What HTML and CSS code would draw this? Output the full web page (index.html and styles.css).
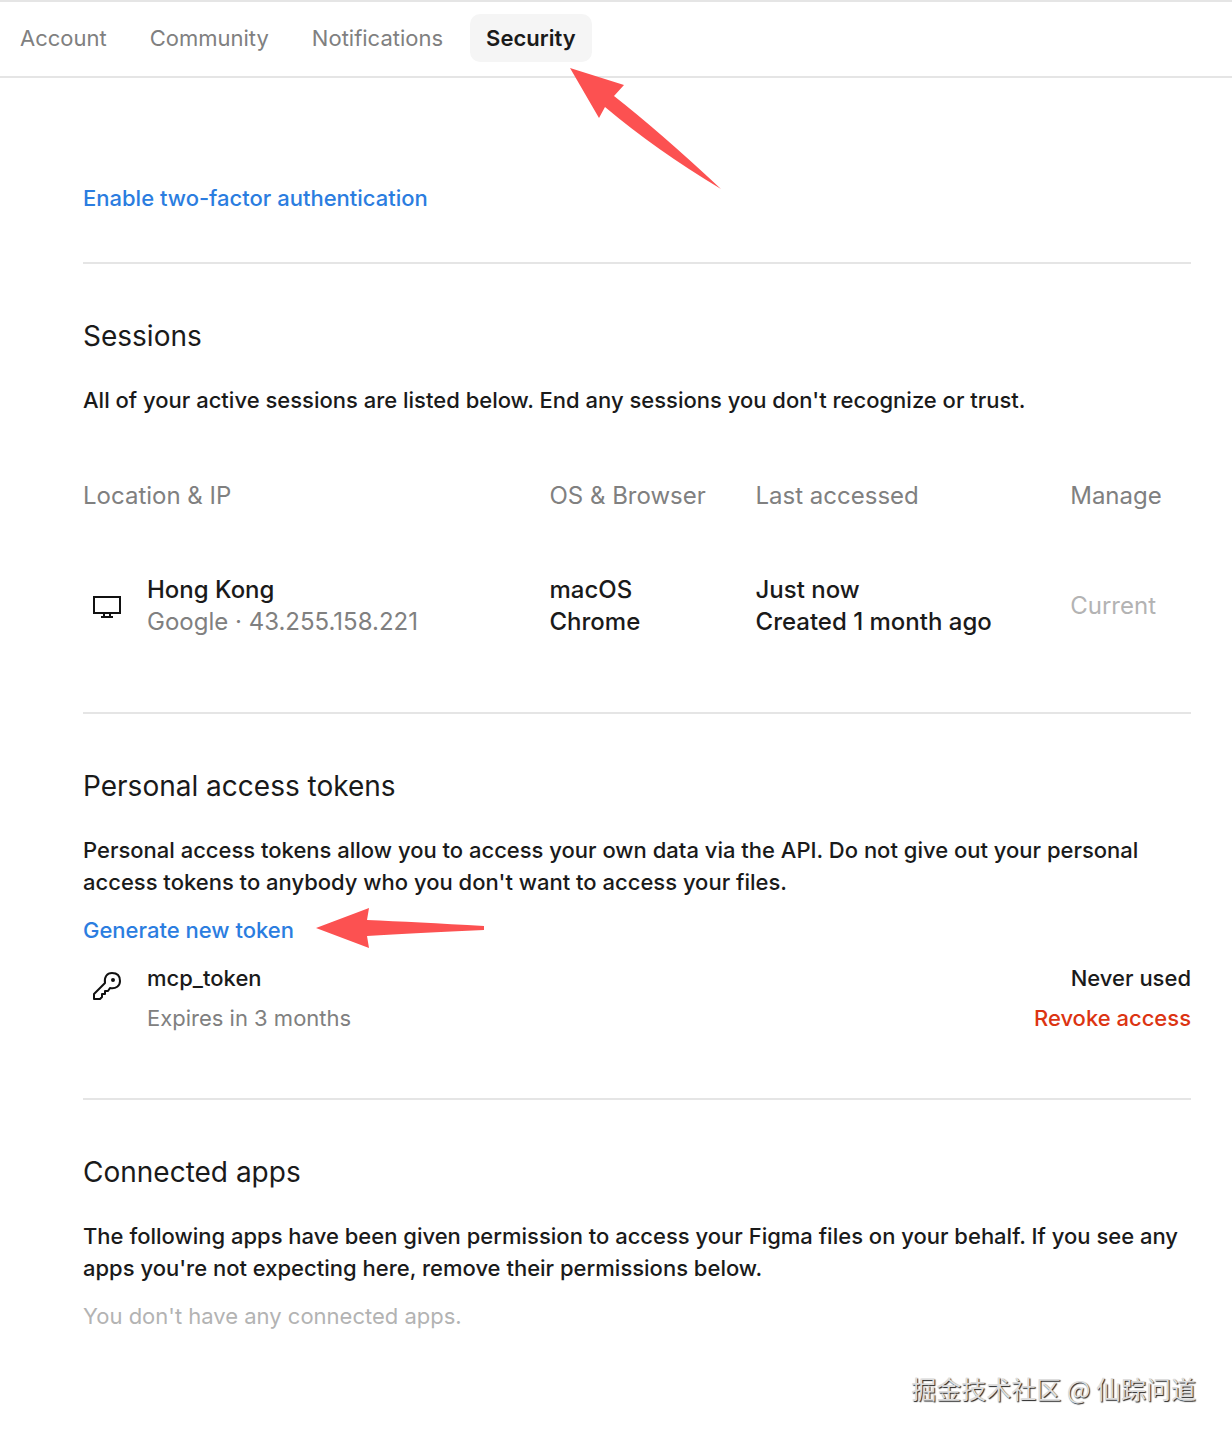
FILE: index.html
```html
<!DOCTYPE html>
<html lang="en">

<head>
    <meta charset="UTF-8">
    <meta name="viewport" content="width=device-width, initial-scale=1.0">
    <title>Settings - Security</title>
    <link rel="stylesheet" href="styles.css">
</head>

<body>
<nav class="tabs">
    <button class="tab" type="button">Account</button>
    <button class="tab" type="button">Community</button>
    <button class="tab" type="button">Notifications</button>
    <button class="tab active" type="button">
        Security
        <svg class="arrow-tab" width="152" height="123" viewBox="0 0 152 123" aria-hidden="true">
            <path d="M0 0 L54 17 L44 28 Q90 64 151 121 Q86 82 35 39 L29 50 Z" fill="#fc5151"/>
        </svg>
    </button>
</nav>

<main>
    <section class="two-factor">
        <a href="#">Enable two-factor authentication</a>
    </section>

    <section>
        <h2>Sessions</h2>
        <p>All of your active sessions are listed below. End any sessions you don't recognize or trust.</p>
        <table class="sessions">
            <thead>
                <tr>
                    <th class="col-location">Location &amp; IP</th>
                    <th class="col-os">OS &amp; Browser</th>
                    <th class="col-accessed">Last accessed</th>
                    <th>Manage</th>
                </tr>
            </thead>
            <tbody>
                <tr>
                    <td>
                        <div class="device">
                            <svg class="icon" width="48" height="48" viewBox="0 0 48 48" fill="none" stroke="#111" stroke-width="2" aria-hidden="true">
                                <rect x="11" y="15" width="26" height="16"/>
                                <path d="M21 32v3M27 32v3M18 35h12"/>
                            </svg>
                            <div>
                                <div>Hong Kong</div>
                                <div class="muted">Google · 43.255.158.221</div>
                            </div>
                        </div>
                    </td>
                    <td>macOS<br>Chrome</td>
                    <td>Just now<br>Created 1 month ago</td>
                    <td class="faint">Current</td>
                </tr>
            </tbody>
        </table>
    </section>

    <section>
        <h2>Personal access tokens</h2>
        <p>Personal access tokens allow you to access your own data via the API. Do not give out your personal access tokens to anybody who you don't want to access your files.</p>
        <div class="generate">
            <a href="#">Generate new token</a>
            <svg class="arrow-token" width="169" height="44" viewBox="0 0 169 44" aria-hidden="true">
                <path d="M0 20 L53 0 L51 12 Q100 14 168 18 V22 Q100 25 51 28 L53 40 Z" fill="#fc5151"/>
            </svg>
        </div>
        <div class="token">
            <svg class="icon" width="48" height="48" viewBox="0 0 48 48" fill="none" stroke="#111" stroke-width="2" stroke-linejoin="round" aria-hidden="true">
                <path d="M11 32l11-11c-1-6 2-10 7-10 5 0 8 3 8 8s-4 8-10 7l-2 3h-3v3h-3v3l-2 2h-6z"/>
                <circle cx="30" cy="18" r="1"/>
            </svg>
            <div class="token-info">
                <span>mcp_token</span>
                <span class="muted">Expires in 3 months</span>
            </div>
            <div class="token-actions">
                <span>Never used</span>
                <button class="revoke" type="button">Revoke access</button>
            </div>
        </div>
    </section>

    <section>
        <h2>Connected apps</h2>
        <p>The following apps have been given permission to access your Figma files on your behalf. If you see any apps you're not expecting here, remove their permissions below.</p>
        <p class="empty faint">You don't have any connected apps.</p>
    </section>
</main>

<footer class="watermark">掘金技术社区 @ 仙踪问道</footer>
</body>

</html>
```
FILE: styles.css
```css
* {
    box-sizing: border-box;
}

body {
    font-family: 'Inter', sans-serif;
    font-size: 22px;
    font-weight: 500;
    line-height: 32px;
    margin: 0;
    color: #1a1a1a;
    background-color: #fff;
}

button {
    font: inherit;
    color: inherit;
    background: none;
    border: none;
    padding: 0;
    cursor: pointer;
}

a {
    color: #2b7de0;
    text-decoration: none;
}

h2 {
    font-size: 28px;
    font-weight: 400;
    line-height: 32px;
    margin: 0 0 32px;
}

p {
    margin: 0;
}

.muted {
    color: #808080;
    font-weight: 400;
}

.faint {
    color: #b3b3b3;
    font-weight: 400;
}

/* Tabs */
.tabs {
    display: flex;
    gap: 11px;
    padding: 12px 4px 14px;
    border-top: 2px solid #e5e5e5;
    border-bottom: 2px solid #e5e5e5;
}

.tab {
    position: relative;
    color: #808080;
    font-weight: 400;
    padding: 8px 16px;
    border-radius: 10px;
}

.tab.active {
    color: #1a1a1a;
    font-weight: 600;
    background-color: #f5f5f5;
}

.arrow-tab {
    position: absolute;
    top: 54px;
    left: 100px;
}

/* Sections */
main {
    padding: 0 41px 0 83px;
}

section {
    padding: 56px 0 64px;
    border-bottom: 2px solid #e5e5e5;
}

section:last-child {
    padding-bottom: 40px;
    border-bottom: none;
}

.two-factor {
    padding: 104px 0 48px;
}

.sessions {
    width: 100%;
    margin-top: 64px;
    border-collapse: collapse;
    table-layout: fixed;
    font-size: 24px;
    text-align: left;
}

.sessions th {
    padding: 0 0 52px;
    color: #808080;
    font-weight: 400;
}

.sessions td {
    padding: 10px 0;
}

.col-location {
    width: 42.1%;
}

.col-os {
    width: 18.6%;
}

.col-accessed {
    width: 28.4%;
}

.device {
    display: flex;
    align-items: center;
    gap: 16px;
}

.icon {
    flex: none;
}

.generate {
    display: flex;
    align-items: center;
    gap: 22px;
    height: 32px;
    margin: 16px 0;
}

.token {
    display: flex;
    gap: 16px;
}

.token-info,
.token-actions {
    display: flex;
    flex-direction: column;
    gap: 8px;
}

.token-actions {
    align-items: flex-end;
    margin-left: auto;
}

.revoke {
    color: #dc3412;
}

.empty {
    margin-top: 16px;
}

.watermark {
    padding: 0 36px 32px;
    font-family: 'Noto Sans CJK SC', sans-serif;
    font-size: 25px;
    font-weight: 400;
    text-align: right;
    color: #ddd;
    text-shadow: 1px 1px 1px #222;
}
```
